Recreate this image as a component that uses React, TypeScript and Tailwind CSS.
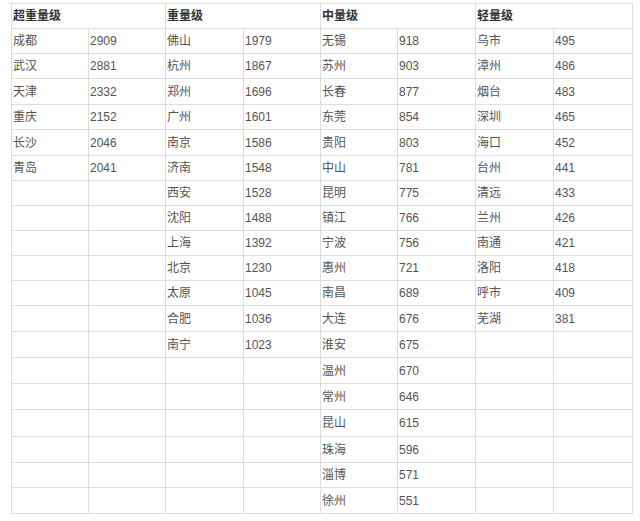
import React from "react";

const groups: { title: string; rows: [string, string][] }[] = [
  {
    title: "超重量级",
    rows: [
      ["成都", "2909"],
      ["武汉", "2881"],
      ["天津", "2332"],
      ["重庆", "2152"],
      ["长沙", "2046"],
      ["青岛", "2041"],
    ],
  },
  {
    title: "重量级",
    rows: [
      ["佛山", "1979"],
      ["杭州", "1867"],
      ["郑州", "1696"],
      ["广州", "1601"],
      ["南京", "1586"],
      ["济南", "1548"],
      ["西安", "1528"],
      ["沈阳", "1488"],
      ["上海", "1392"],
      ["北京", "1230"],
      ["太原", "1045"],
      ["合肥", "1036"],
      ["南宁", "1023"],
    ],
  },
  {
    title: "中量级",
    rows: [
      ["无锡", "918"],
      ["苏州", "903"],
      ["长春", "877"],
      ["东莞", "854"],
      ["贵阳", "803"],
      ["中山", "781"],
      ["昆明", "775"],
      ["镇江", "766"],
      ["宁波", "756"],
      ["惠州", "721"],
      ["南昌", "689"],
      ["大连", "676"],
      ["淮安", "675"],
      ["温州", "670"],
      ["常州", "646"],
      ["昆山", "615"],
      ["珠海", "596"],
      ["淄博", "571"],
      ["徐州", "551"],
    ],
  },
  {
    title: "轻量级",
    rows: [
      ["乌市", "495"],
      ["漳州", "486"],
      ["烟台", "483"],
      ["深圳", "465"],
      ["海口", "452"],
      ["台州", "441"],
      ["清远", "433"],
      ["兰州", "426"],
      ["南通", "421"],
      ["洛阳", "418"],
      ["呼市", "409"],
      ["芜湖", "381"],
    ],
  },
];

const rowHeights = [
  "h-[25px]",
  "h-[25px]",
  "h-[26px]",
  "h-[25px]",
  "h-[26px]",
  "h-[25px]",
  "h-[25px]",
  "h-[25px]",
  "h-[25px]",
  "h-[25px]",
  "h-[25px]",
  "h-[26px]",
  "h-[26px]",
  "h-[26px]",
  "h-[26px]",
  "h-[27px]",
  "h-[26px]",
  "h-[25px]",
  "h-[26px]",
];

const cols = "grid grid-cols-[77px_77px_78px_77px_77px_78px_78px_79px]";
const cell =
  "flex items-center border-r border-b border-[#dedede] pl-[1px] overflow-hidden whitespace-nowrap";

export default function App() {
  return (
    <div
      className="w-[640px] h-[521px] bg-white pt-[3px] pl-[11px]"
      style={{ fontFamily: '"Liberation Sans", "Noto Sans CJK SC", sans-serif' }}
    >
      <div className="w-[622px] border-l border-t border-[#dedede]">
        <div className={`${cols} h-[25px]`}>
          {groups.map((g) => (
            <div
              key={g.title}
              className={`${cell} col-span-2 text-[12px] font-bold text-[#333]`}
            >
              {g.title}
            </div>
          ))}
        </div>
        {rowHeights.map((h, i) => (
          <div key={i} className={`${cols} ${h}`}>
            {groups.map((g) => {
              const r = g.rows[i];
              return (
                <React.Fragment key={g.title}>
                  <div className={`${cell} text-[12px] text-[#555]`}>{r ? r[0] : ""}</div>
                  <div className={`${cell} text-[12px] text-[#555]`}>{r ? r[1] : ""}</div>
                </React.Fragment>
              );
            })}
          </div>
        ))}
      </div>
    </div>
  );
}
